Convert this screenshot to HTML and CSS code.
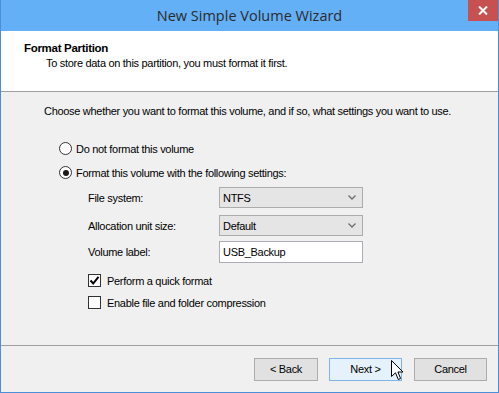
FILE: index.html
```html
<!DOCTYPE html>
<html>
<head>
<meta charset="utf-8">
<link rel="stylesheet" href="styles.css">
</head>
<body>
<div class="window">
  <div class="titlebar">
    <div class="spacer"></div>
    <div class="title">New Simple Volume Wizard</div>
    <div class="tb-right">
      <div class="close">
        <svg width="10" height="9" viewBox="0 0 10 9"><path d="M1 0.5 L9 8.5 M9 0.5 L1 8.5" stroke="#fff" stroke-width="2"/></svg>
      </div>
    </div>
  </div>
  <div class="client">
    <div class="header">
      <div class="h-title">Format Partition</div>
      <div class="h-sub">To store data on this partition, you must format it first.</div>
    </div>
    <div class="content">
      <div class="intro">Choose whether you want to format this volume, and if so, what settings you want to use.</div>
      <div class="options">
        <label class="radio-row"><span class="radio"></span><span>Do not format this volume</span></label>
        <label class="radio-row"><span class="radio checked"></span><span>Format this volume with the following settings:</span></label>
        <div class="settings">
          <div class="field">
            <span class="flabel">File system:</span>
            <div class="combo"><span>NTFS</span><svg class="chev" width="8" height="5" viewBox="0 0 8 5"><path d="M0.5 0.5 L4 4 L7.5 0.5" fill="none" stroke="#6d6d6d" stroke-width="1.3"/></svg></div>
          </div>
          <div class="field f2">
            <span class="flabel">Allocation unit size:</span>
            <div class="combo"><span>Default</span><svg class="chev" width="8" height="5" viewBox="0 0 8 5"><path d="M0.5 0.5 L4 4 L7.5 0.5" fill="none" stroke="#6d6d6d" stroke-width="1.3"/></svg></div>
          </div>
          <div class="field f3">
            <span class="flabel">Volume label:</span>
            <div class="textbox">USB_Backup</div>
          </div>
          <div class="checks">
            <label class="check-row"><span class="check checked"><svg width="11" height="11" viewBox="0 0 11 11"><path d="M1.5 5.5 L4.2 8.5 L9.5 1.8" fill="none" stroke="#000" stroke-width="2"/></svg></span><span>Perform a quick format</span></label>
            <label class="check-row"><span class="check"></span><span>Enable file and folder compression</span></label>
          </div>
        </div>
      </div>
    </div>
    <div class="footer">
      <div class="btn back">&lt; Back</div>
      <div class="btn next">Next &gt;
        <svg class="cursor" width="13" height="21" viewBox="0 0 13 21"><path d="M0.5 0.5 L0.5 16.5 L4.5 12.8 L7.3 19.5 L9.6 18.5 L6.9 12 L12 12 Z" fill="#fff" stroke="#000" stroke-width="1" stroke-linejoin="miter"/></svg>
      </div>
      <div class="btn cancel">Cancel</div>
    </div>
  </div>
</div>
</body>
</html>
```

FILE: styles.css
```css
html, body {
  margin: 0;
  padding: 0;
  background: #fff;
}
.window {
  width: 499px;
  height: 393px;
  box-sizing: border-box;
  border: 1px solid #4a8fd8;
  border-top: none;
  display: flex;
  flex-direction: column;
  font-family: "Liberation Sans", Arial, sans-serif;
  font-size: 11px;
  letter-spacing: -0.3px;
  color: #000;
}
.titlebar {
  height: 31px;
  flex: none;
  background: #63b0f7;
  display: grid;
  grid-template-columns: 1fr auto 1fr;
  align-items: start;
}
.title {
  font-family: "Open Sans", "Noto Sans", sans-serif;
  font-size: 14.5px;
  letter-spacing: 0;
  color: #2b2b2b;
  line-height: 31px;
}
.tb-right {
  display: flex;
  justify-content: flex-end;
}
.close {
  width: 30px;
  height: 21px;
  background: #c75050;
  display: flex;
  align-items: center;
  justify-content: center;
}
.client {
  flex: 1;
  display: flex;
  flex-direction: column;
  background: #f0f0f0;
}
.header {
  background: #fff;
  height: 50px;
  border-bottom: 1px solid #a0a0a0;
  padding: 10px 0 0 23px;
  box-sizing: content-box;
  flex: none;
}
.h-title {
  font-weight: bold;
  font-size: 11.5px;
  line-height: 14px;
}
.h-sub {
  padding-left: 22px;
  line-height: 16px;
}
.content {
  flex: 1;
  padding: 13px 0 0 43px;
  border-bottom: 1px solid #a0a0a0;
}
.intro {
  line-height: 13px;
}
.options {
  padding: 24px 0 0 15px;
}
.radio-row, .check-row {
  display: flex;
  align-items: center;
  gap: 4px;
  height: 13px;
}
.radio-row + .radio-row {
  margin-top: 11px;
}
.radio {
  width: 11px;
  height: 11px;
  border: 1px solid #333;
  border-radius: 50%;
  background: #fff;
  display: flex;
  align-items: center;
  justify-content: center;
}
.radio.checked::after {
  content: "";
  width: 6px;
  height: 6px;
  border-radius: 50%;
  background: #1a1a1a;
}
.settings {
  padding: 8px 0 0 29px;
}
.field {
  display: flex;
  align-items: center;
}
.field.f2 {
  margin-top: 7px;
}
.field.f3 {
  margin-top: 5px;
}
.flabel {
  width: 131px;
}
.combo {
  height: 19px;
  border: 1px solid #acacac;
  background: #e5e5e5;
  display: flex;
  align-items: center;
  justify-content: space-between;
  padding: 0 6px 0 3px;
  box-sizing: content-box;
  width: 133px;
}
.textbox {
  width: 139px;
  height: 20px;
  border: 1px solid #abadb3;
  background: #fff;
  padding-left: 3px;
  line-height: 20px;
}
.checks {
  padding-top: 11px;
}
.check-row + .check-row {
  margin-top: 9px;
}
.check {
  width: 11px;
  height: 11px;
  border: 1px solid #333;
  background: #fff;
  display: flex;
  align-items: center;
  justify-content: center;
  margin-right: 2px;
}
.footer {
  height: 46px;
  flex: none;
  display: flex;
  align-items: center;
  padding: 0 0 0 253px;
}
.btn {
  position: relative;
  width: 62px;
  height: 21px;
  border: 1px solid #acacac;
  background: #e1e1e1;
  display: flex;
  align-items: center;
  justify-content: center;
}
.btn.next, .btn.cancel {
  width: 71px;
}
.btn.next {
  margin-left: 11px;
  background: #e5f1fb;
  border-color: #7eb4ea;
}
.btn.cancel {
  margin-left: 12px;
}
.cursor {
  position: absolute;
  left: 61px;
  top: 1px;
}
```
